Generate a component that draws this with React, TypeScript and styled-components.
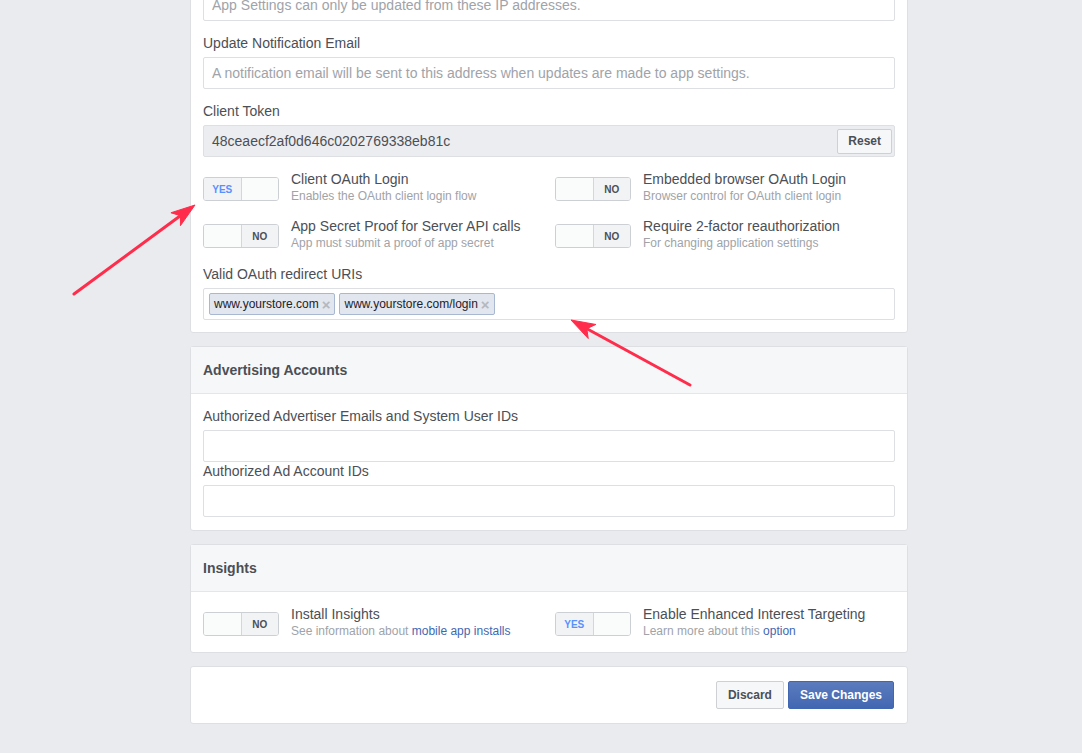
import styled, { createGlobalStyle } from 'styled-components';

const GlobalStyle = createGlobalStyle`
  html, body {
    margin: 0;
    padding: 0;
    background: #e9ebee;
    font-family: "Liberation Sans", Arial, Helvetica, sans-serif;
    overflow: hidden;
  }
`;

const Page = styled.div`
  position: relative;
  width: 1082px;
  height: 753px;
  overflow: hidden;
`;

const Column = styled.div`
  display: flex;
  flex-direction: column;
  gap: 13px;
  width: 718px;
  margin: -24px 0 0 190px;
`;

const Card = styled.section`
  background: #fff;
  border: 1px solid #dddfe2;
  border-radius: 3px;
  box-sizing: border-box;
`;

const CardHeader = styled.header`
  display: flex;
  align-items: center;
  height: 46px;
  padding: 0 12px;
  background: #f6f7f9;
  border-bottom: 1px solid #e5e6e9;
  font-size: 14px;
  font-weight: bold;
  color: #4b4f56;
`;

const CardBody = styled.div<{ $gap?: number; $pad?: string }>`
  display: flex;
  flex-direction: column;
  gap: ${(p) => p.$gap ?? 13}px;
  padding: ${(p) => p.$pad ?? '12px'};
`;

const Field = styled.div`
  display: flex;
  flex-direction: column;
`;

const Label = styled.label`
  font-size: 14px;
  line-height: 18px;
  color: #4b4f56;
  margin-bottom: 5px;
`;

const TextInput = styled.input`
  box-sizing: border-box;
  width: 100%;
  height: 32px;
  padding: 0 8px;
  border: 1px solid #dddfe2;
  border-radius: 2px;
  font-family: inherit;
  font-size: 14px;
  color: #1d2129;
  background: #fff;
  outline: none;

  &::placeholder {
    color: #a0a3a9;
  }
`;

const TokenBox = styled.div`
  box-sizing: border-box;
  display: flex;
  align-items: center;
  justify-content: space-between;
  height: 32px;
  padding: 0 2px 0 8px;
  background: #ebedf0;
  border: 1px solid #dddfe2;
  border-radius: 2px;
  font-size: 14px;
  color: #4b4f56;
`;

const Button = styled.button<{ $primary?: boolean; $small?: boolean }>`
  box-sizing: border-box;
  height: ${(p) => (p.$small ? 25 : 28)}px;
  padding: 0 ${(p) => (p.$small ? 10 : 11)}px;
  border: 1px solid ${(p) => (p.$primary ? '#4267b2' : '#ced0d4')};
  border-radius: 2px;
  background: ${(p) =>
    p.$primary ? 'linear-gradient(#5b7bbd, #4267b2)' : '#f6f7f9'};
  color: ${(p) => (p.$primary ? '#fff' : '#4b4f56')};
  font-family: inherit;
  font-size: 12px;
  font-weight: bold;
  cursor: pointer;
`;

const ToggleGrid = styled.div<{ $spaced?: boolean }>`
  display: grid;
  grid-template-columns: 1fr 1fr;
  column-gap: 12px;
  row-gap: 14px;
  margin: ${(p) => (p.$spaced ? '1px 0' : '0')};
`;

const ToggleRow = styled.div`
  display: flex;
  align-items: flex-start;
  gap: 12px;
`;

const ToggleBox = styled.div`
  flex: none;
  display: flex;
  width: 76px;
  height: 24px;
  margin-top: 6px;
  box-sizing: border-box;
  border: 1px solid #ccd0d5;
  border-radius: 3px;
  overflow: hidden;
`;

const ToggleHalf = styled.span<{ $label?: 'YES' | 'NO' }>`
  flex: 1;
  display: flex;
  align-items: center;
  justify-content: center;
  background: ${(p) => (p.$label ? '#f2f3f5' : '#fafbfb')};
  font-size: 10px;
  font-weight: bold;
  color: ${(p) => (p.$label === 'YES' ? '#5890ff' : '#4b4f56')};

  & + & {
    border-left: 1px solid #d3d6db;
  }
`;

const ToggleText = styled.div`
  display: flex;
  flex-direction: column;
`;

const ToggleTitle = styled.span`
  font-size: 14px;
  line-height: 17px;
  color: #4b4f56;
`;

const ToggleSub = styled.span`
  font-size: 12px;
  line-height: 16px;
  color: #a0a3a9;
`;

const Link = styled.a`
  color: #4267b2;
  text-decoration: none;
`;

const TagInput = styled.div`
  box-sizing: border-box;
  display: flex;
  align-items: center;
  gap: 4px;
  height: 32px;
  padding: 0 5px;
  border: 1px solid #dddfe2;
  border-radius: 2px;
  background: #fff;
`;

const Tag = styled.span`
  display: inline-flex;
  align-items: center;
  gap: 3px;
  height: 22px;
  box-sizing: border-box;
  padding: 0 4px;
  background: #e2e6ee;
  border: 1px solid #a9b8d1;
  border-radius: 2px;
  font-size: 12px;
  color: #1d2129;
`;

const TagClose = styled.span`
  font-size: 15px;
  font-weight: bold;
  color: #b4b8bf;
  line-height: 1;
`;

const Footer = styled.div`
  display: flex;
  justify-content: flex-end;
  gap: 4px;
  padding: 14px 13px 14px;
`;

const Overlay = styled.svg`
  position: absolute;
  top: 0;
  left: 0;
  pointer-events: none;
`;

type ToggleProps = { on: boolean; title: string; sub: React.ReactNode };

const Toggle = ({ on, title, sub }: ToggleProps) => (
  <ToggleRow>
    <ToggleBox>
      {on ? (
        <>
          <ToggleHalf $label="YES">YES</ToggleHalf>
          <ToggleHalf />
        </>
      ) : (
        <>
          <ToggleHalf />
          <ToggleHalf $label="NO">NO</ToggleHalf>
        </>
      )}
    </ToggleBox>
    <ToggleText>
      <ToggleTitle>{title}</ToggleTitle>
      <ToggleSub>{sub}</ToggleSub>
    </ToggleText>
  </ToggleRow>
);

type ArrowProps = { x1: number; y1: number; x2: number; y2: number };

const Arrow = ({ x1, y1, x2, y2 }: ArrowProps) => {
  const len = Math.hypot(x2 - x1, y2 - y1);
  const ux = (x2 - x1) / len;
  const uy = (y2 - y1) / len;
  const head = 24;
  const half = 8;
  const bx = x2 - ux * head;
  const by = y2 - uy * head;
  const pts = [
    [x2, y2],
    [bx - uy * half, by + ux * half],
    [x2 - ux * (head - 6), y2 - uy * (head - 6)],
    [bx + uy * half, by - ux * half],
  ]
    .map((p) => p.join(','))
    .join(' ');
  return (
    <g fill="#ff2d4b" stroke="#ff2d4b">
      <line x1={x1} y1={y1} x2={x2 - ux * 14} y2={y2 - uy * 14} strokeWidth={3} strokeLinecap="round" />
      <polygon points={pts} strokeWidth={1} strokeLinejoin="round" />
    </g>
  );
};

const App = () => (
  <Page>
    <GlobalStyle />
    <Column>
      <Card>
        <CardBody>
          <Field>
            <TextInput placeholder="App Settings can only be updated from these IP addresses." />
          </Field>
          <Field>
            <Label>Update Notification Email</Label>
            <TextInput placeholder="A notification email will be sent to this address when updates are made to app settings." />
          </Field>
          <Field>
            <Label>Client Token</Label>
            <TokenBox>
              48ceaecf2af0d646c0202769338eb81c
              <Button $small>Reset</Button>
            </TokenBox>
          </Field>
          <ToggleGrid $spaced>
            <Toggle on title="Client OAuth Login" sub="Enables the OAuth client login flow" />
            <Toggle on={false} title="Embedded browser OAuth Login" sub="Browser control for OAuth client login" />
            <Toggle on={false} title="App Secret Proof for Server API calls" sub="App must submit a proof of app secret" />
            <Toggle on={false} title="Require 2-factor reauthorization" sub="For changing application settings" />
          </ToggleGrid>
          <Field>
            <Label>Valid OAuth redirect URIs</Label>
            <TagInput>
              {['www.yourstore.com', 'www.yourstore.com/login'].map((uri) => (
                <Tag key={uri}>
                  {uri}
                  <TagClose>×</TagClose>
                </Tag>
              ))}
            </TagInput>
          </Field>
        </CardBody>
      </Card>

      <Card>
        <CardHeader>Advertising Accounts</CardHeader>
        <CardBody $gap={0} $pad="13px 12px">
          <Field>
            <Label>Authorized Advertiser Emails and System User IDs</Label>
            <TextInput />
          </Field>
          <Field>
            <Label>Authorized Ad Account IDs</Label>
            <TextInput />
          </Field>
        </CardBody>
      </Card>

      <Card>
        <CardHeader>Insights</CardHeader>
        <CardBody $pad="14px 12px 13px">
          <ToggleGrid>
            <Toggle
              on={false}
              title="Install Insights"
              sub={
                <>
                  See information about <Link href="#">mobile app installs</Link>
                </>
              }
            />
            <Toggle
              on
              title="Enable Enhanced Interest Targeting"
              sub={
                <>
                  Learn more about this <Link href="#">option</Link>
                </>
              }
            />
          </ToggleGrid>
        </CardBody>
      </Card>

      <Card>
        <Footer>
          <Button>Discard</Button>
          <Button $primary>Save Changes</Button>
        </Footer>
      </Card>
    </Column>

    <Overlay width={1082} height={753}>
      <Arrow x1={74} y1={294} x2={195} y2={205} />
      <Arrow x1={690} y1={385} x2={571} y2={320} />
    </Overlay>
  </Page>
);

export default App;
